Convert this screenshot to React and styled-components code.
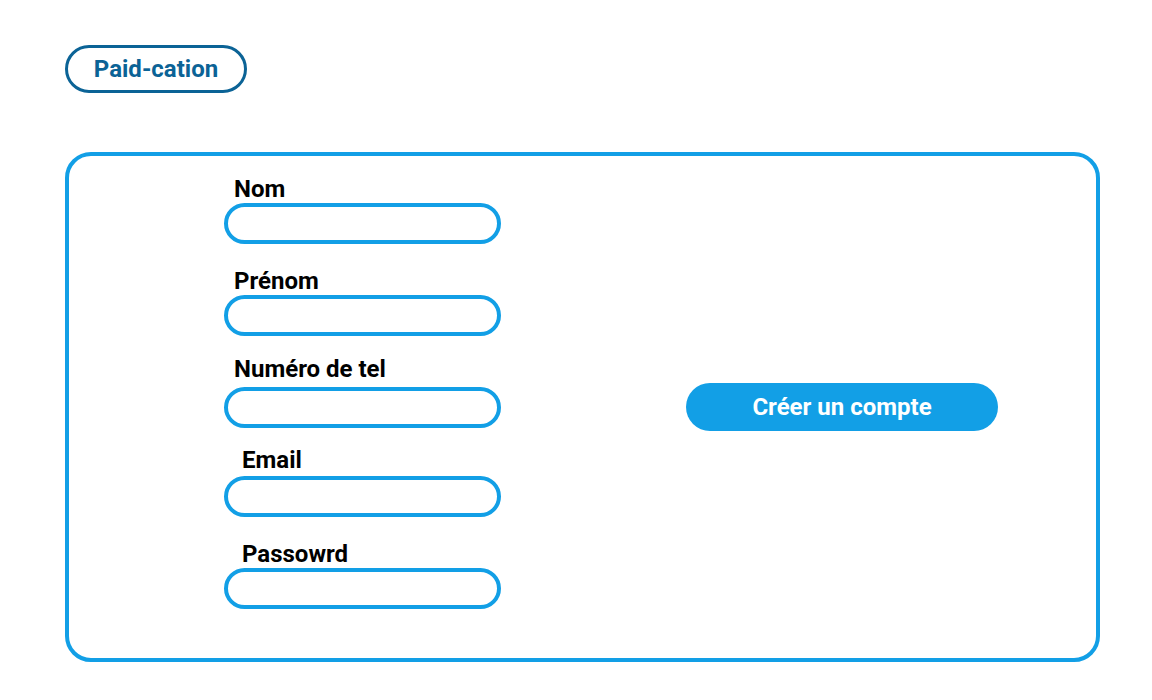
import React from 'react';
import styled, { createGlobalStyle } from 'styled-components';

const GlobalStyle = createGlobalStyle`
  body {
    margin: 0;
    background: #fff;
    font-family: Roboto, "Liberation Sans", Arial, sans-serif;
  }
`;

const Page = styled.div`
  padding: 45px 0 0 65px;
`;

const Brand = styled.div`
  box-sizing: border-box;
  width: 182px;
  height: 48px;
  border: 3px solid #0b6396;
  border-radius: 24px;
  display: flex;
  align-items: center;
  justify-content: center;
  color: #0b6396;
  font-size: 24px;
  font-weight: 700;
`;

const Card = styled.div`
  box-sizing: border-box;
  width: 1035px;
  margin-top: 59px;
  border: 4px solid #129fe6;
  border-radius: 26px;
  display: grid;
  grid-template-columns: 513px 1fr;
  align-items: center;
`;

const Form = styled.form`
  display: flex;
  flex-direction: column;
  padding: 19px 0 49px 155px;
`;

const Field = styled.div`
  display: flex;
  flex-direction: column;
  margin-top: ${p => p.$top || 0}px;
`;

const Label = styled.label`
  font-size: 24px;
  line-height: 28px;
  font-weight: 700;
  color: #000;
  padding-left: ${p => p.$indent || 10}px;
  margin-bottom: ${p => p.$gap || 0}px;
`;

const Input = styled.input`
  box-sizing: border-box;
  width: 277px;
  height: 41px;
  border: 4px solid #129fe6;
  border-radius: 21px;
  padding: 0 14px;
  font-size: 16px;
  outline: none;
  background: #fff;
`;

const Actions = styled.div`
  display: flex;
  justify-content: center;
  padding-left: 6px;
`;

const Button = styled.button`
  width: 312px;
  height: 48px;
  border: none;
  border-radius: 24px;
  background: #129fe6;
  color: #fff;
  font-family: inherit;
  font-size: 24px;
  font-weight: 700;
  cursor: pointer;
`;

const fields = [
  { label: 'Nom', top: 0, gap: 0, indent: 10 },
  { label: 'Prénom', top: 23, gap: 0, indent: 10 },
  { label: 'Numéro de tel', top: 19, gap: 4, indent: 10 },
  { label: 'Email', top: 18, gap: 2, indent: 18 },
  { label: 'Passowrd', top: 23, gap: 0, indent: 18, type: 'password' },
];

const App = () => (
  <Page>
    <GlobalStyle />
    <Brand>Paid-cation</Brand>
    <Card>
      <Form onSubmit={e => e.preventDefault()}>
        {fields.map(f => (
          <Field key={f.label} $top={f.top}>
            <Label $indent={f.indent} $gap={f.gap}>{f.label}</Label>
            <Input type={f.type || 'text'} />
          </Field>
        ))}
      </Form>
      <Actions>
        <Button type="button">Créer un compte</Button>
      </Actions>
    </Card>
  </Page>
);

export default App;
